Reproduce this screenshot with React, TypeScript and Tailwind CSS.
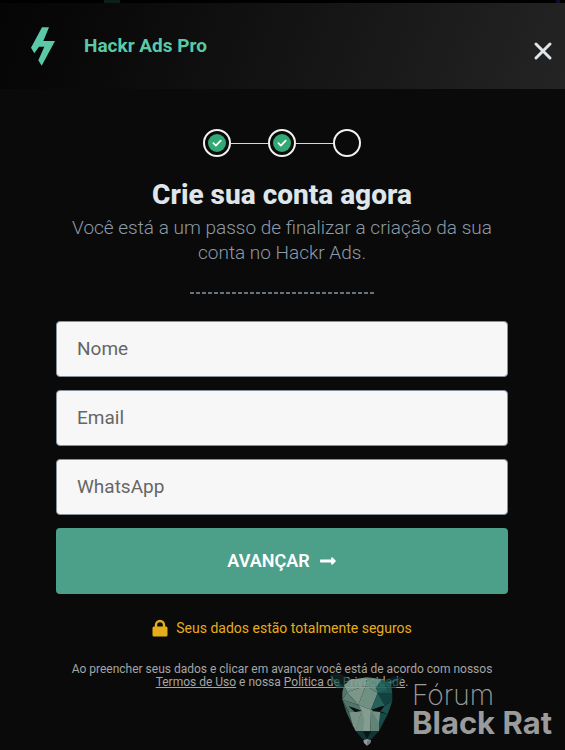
import { FaLongArrowAltRight } from 'react-icons/fa'

const FIELDS = [
  { id: 'nome', label: 'Nome', type: 'text' },
  { id: 'email', label: 'Email', type: 'email' },
  { id: 'whatsapp', label: 'WhatsApp', type: 'tel' },
]

const STEPS = [
  { n: 1, done: true },
  { n: 2, done: true },
  { n: 3, done: false },
]

function Logo() {
  return (
    <svg viewBox="0 0 72 117" className="h-[39px] w-6 fill-[#5bc9a8]" aria-hidden="true">
      <path d="M33 1h21L37 42h35L32 116 22 100 40 59H24L10 79 0 62Z" />
    </svg>
  )
}

function Steps() {
  return (
    <ol className="flex items-center justify-center">
      {STEPS.map(step => (
        <li key={step.n} className="flex items-center">
          {step.n > 1 && <span className="h-px w-[37px] bg-[#d8d8d8]" />}
          <span className="flex size-7 items-center justify-center rounded-full border-2 border-[#f2f2f2]">
            {step.done && (
              <svg viewBox="0 0 18 18" className="size-[18px]" aria-label={`Etapa ${step.n} concluída`}>
                <circle cx="9" cy="9" r="9" fill="#30a974" />
                <path
                  d="M5.4 9.2 7.9 11.6l4.8-4.9"
                  fill="none"
                  stroke="#fff"
                  strokeWidth="1.8"
                  strokeLinecap="round"
                  strokeLinejoin="round"
                />
              </svg>
            )}
          </span>
        </li>
      ))}
    </ol>
  )
}

function RatHead() {
  return (
    <svg viewBox="10 20 231 234" className="h-[78px] w-[77px] opacity-90" aria-hidden="true">
      {/* ears */}
      <g opacity="0.75">
        <path d="M13 40 26 32 44 34 74 50 58 76 34 78 20 62Z" fill="#0d2a29" />
        <path d="M13 40 34 78 56 76 40 60Z" fill="#1f5c54" />
        <path d="M232 44 204 42 178 52 186 80 212 76 222 62Z" fill="#0b2424" />
        <path d="M232 44 206 54 180 56 190 68Z" fill="#1c6159" />
      </g>
      {/* forehead */}
      <path d="M56 68 74 52 124 45 120 70 64 90Z" fill="#84a598" />
      <path d="M56 68 64 90 50 112 50 88Z" fill="#5c8377" />
      <path d="M124 45 168 50 156 92 120 70Z" fill="#6d9788" />
      <path d="M64 90 120 70 98 128Z" fill="#89a698" />
      <path d="M64 90 98 128 50 112Z" fill="#6b8f82" />
      <path d="M120 70 156 92 136 142 98 128Z" fill="#7c9f91" />
      {/* shaded side */}
      <path d="M168 50 196 66 200 92 156 92Z" fill="#1b5a56" />
      <path d="M168 50 150 76 156 92 184 84Z" fill="#246861" />
      <path d="M156 92 200 92 200 116 178 130Z" fill="#154845" />
      <path d="M156 92 178 130 136 142Z" fill="#2a6a63" />
      <path d="M178 130 200 116 186 156 164 146Z" fill="#1d5b56" />
      {/* cheeks and muzzle */}
      <path d="M50 112 98 128 108 146 70 150Z" fill="#5a8075" />
      <path d="M50 112 70 150 84 196 62 150Z" fill="#3c665d" />
      <path d="M70 150 108 146 90 206 82 190Z" fill="#84a194" />
      <path d="M108 146 98 128 136 142 134 208 90 206Z" fill="#93ad9f" />
      <path d="M108 146 116 170 112 207 90 206Z" fill="#7f9f92" />
      <path d="M136 142 162 150 160 206 134 208Z" fill="#6b9184" />
      <path d="M162 150 186 156 160 206Z" fill="#19534e" />
      <path d="M136 142 164 146 160 182Z" fill="#80a294" />
      <path d="M90 206 160 206 138 230 110 230Z" fill="#113a38" />
      <path d="M112 207 136 207 124 230Z" fill="#071a1a" />
      {/* eyes and nose */}
      <path d="M68 132 84 136 107 145 88 149Z" fill="#07100f" />
      <path d="M174 130 160 134 138 146 162 149Z" fill="#07100f" />
      <path d="M113 233 124 230 136 233 134 242 124 250 115 242Z" fill="#aaa8b2" />
      <path d="M124 236 136 233 134 242 124 250Z" fill="#817f8a" />
    </svg>
  )
}

export default function App() {
  return (
    <div className="relative min-h-screen bg-[#0a0a0a] font-[Roboto,sans-serif] text-[#dfe6ea]">
      <div className="flex h-[3px] justify-between bg-black pr-[5px] pl-[104px]">
        <span className="w-4 bg-[#0c1f1c]" />
        <span className="w-1 bg-[#130c2c]" />
      </div>
      <header className="flex h-[86px] items-center bg-linear-110 from-[#050505] to-[#242424] pr-3 pl-[31px]">
        <Logo />
        <span className="ml-[29px] text-[19px] font-bold text-[#5bc9a8]">Hackr Ads Pro</span>
        <button type="button" aria-label="Fechar" className="ml-auto pt-[10px]">
          <svg viewBox="0 0 20 20" className="size-5" fill="none" stroke="#dfe6ea" strokeWidth="3" strokeLinecap="round">
            <path d="m3 3 14 14M17 3 3 17" />
          </svg>
        </button>
      </header>

      <main className="pt-10 pr-[57px] pl-14 text-center">
        <Steps />
        <h1 className="mt-5 text-[28px] leading-9 font-extrabold">Crie sua conta agora</h1>
        <p className="mt-0.5 text-[19px] leading-[25px] font-light text-[#8d9ba8]">
          Você está a um passo de finalizar a criação da sua conta no Hackr Ads.
        </p>
        <div className="mx-auto mt-[27px] h-0.5 w-[184px] bg-[repeating-linear-gradient(90deg,#68727b_0_4px,transparent_4px_6px)]" />

        <form className="mt-[27px]">
          <div className="flex flex-col gap-[13px]">
            {FIELDS.map(f => (
              <input
                key={f.id}
                id={f.id}
                type={f.type}
                aria-label={f.label}
                placeholder={f.label}
                className="h-14 w-full rounded border border-[#87909a] bg-[#f7f7f7] px-5 pb-0.5 text-[19px] text-[#333] placeholder:text-[#666]"
              />
            ))}
            <button
              type="button"
              className="flex h-[66px] items-center justify-center gap-[9px] rounded bg-[#4ca08a] text-lg font-semibold text-white"
            >
              AVANÇAR <FaLongArrowAltRight className="size-[18px]" />
            </button>
          </div>
        </form>

        <p className="mt-6 flex items-center justify-center gap-2 text-sm text-[#e6ad1b]">
          <svg viewBox="0 0 16 18" className="h-[18px] w-4" aria-hidden="true">
            <path d="M4 8V6a4 4 0 0 1 8 0v2" fill="none" stroke="currentColor" strokeWidth="2.4" />
            <rect x="0.5" y="7.5" width="15" height="10" rx="1.5" fill="currentColor" />
          </svg>
          Seus dados estão totalmente seguros
        </p>

        <p className="mt-[25px] text-xs leading-[13px] text-[#a5a5a5]">
          Ao preencher seus dados e clicar em avançar você está de acordo com nossos{' '}
          <a href="#termos" className="underline">Termos de Uso</a> e nossa{' '}
          <a href="#privacidade" className="underline">Politica de Privacidade</a>.
        </p>
      </main>

      {/* Watermark */}
      <div className="pointer-events-none absolute right-[13px] bottom-[3px] flex items-end gap-1.5">
        <RatHead />
        <div className="pb-[10px] font-[Inter,sans-serif] text-[#9b9b9b]">
          <div className="text-[28px] leading-7 font-extralight">Fórum</div>
          <div className="text-[31px] leading-7 font-bold">Black Rat</div>
        </div>
      </div>
    </div>
  )
}
